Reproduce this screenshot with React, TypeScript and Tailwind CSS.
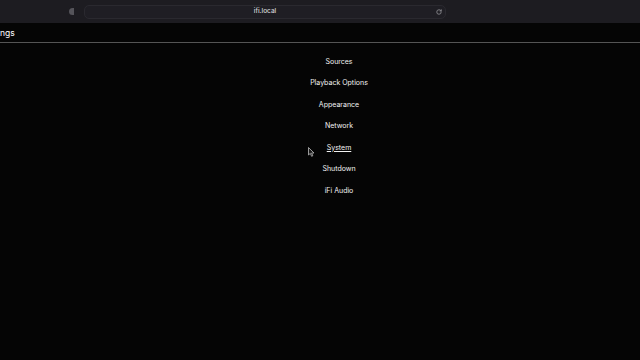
import { RotateCw } from "lucide-react";

const items = ["Sources", "Playback Options", "Appearance", "Network", "System", "Shutdown", "iFi Audio"];

export default function App() {
  return (
    <div className="relative w-[640px] h-[360px] overflow-hidden bg-[#050505] font-['Inter',sans-serif] text-white">
      {/* browser chrome */}
      <div className="h-[23px] bg-[#1d1c21] flex items-center">
        <div className="w-[68px] flex justify-end">
          <span className="mr-[-6px] w-[5px] h-[7px] rounded-l-full bg-[#55545a]" />
        </div>
        <div className="ml-[16px] w-[362px] h-[14px] rounded-[5px] bg-[#1f1e24] border border-[#2a292f] flex items-center justify-center relative">
          <span className="text-[6.5px] text-[#d8d8d8] font-medium">ifi.local</span>
          <RotateCw className="absolute right-[3px] w-[6px] h-[6px] text-[#9a9a9e]" strokeWidth={3} />
        </div>
      </div>

      {/* page header */}
      <div className="h-[20px] flex items-center pt-[2px] border-b border-[#555555]">
        <span className="text-[8.5px] text-white">ngs</span>
      </div>

      {/* menu */}
      <nav className="flex flex-col items-center pl-[38px] pt-[8px]">
        {items.map((item) => (
          <a
            key={item}
            className={`h-[21.5px] flex items-center text-[7px] text-[#f2f2f2] ${item === "System" ? "underline underline-offset-1" : ""}`}
          >
            {item}
          </a>
        ))}
      </nav>

      {/* mouse cursor */}
      <svg className="absolute left-[308px] top-[147px]" width="7" height="10" viewBox="0 0 7 10">
        <path d="M0.5 0.5 L0.5 8 L2.3 6.4 L3.6 9.3 L4.8 8.8 L3.6 6 L6 6 Z" fill="#1a1a1a" stroke="#bdbdbd" strokeWidth="0.8" />
      </svg>
    </div>
  );
}
